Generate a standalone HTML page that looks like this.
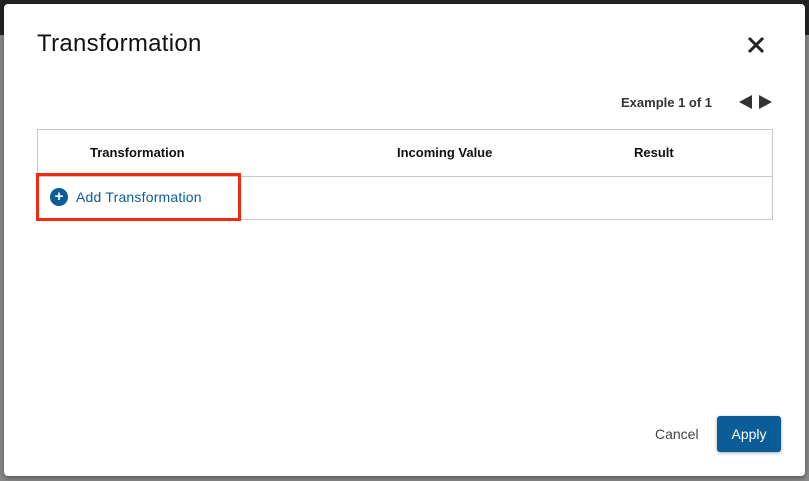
<!DOCTYPE html>
<html><head><meta charset="utf-8"><style>
*{margin:0;padding:0;box-sizing:border-box}
body{width:809px;height:481px;overflow:hidden;position:relative;background:#8a8a8a;font-family:"Liberation Sans",Arial,sans-serif}
.top{position:absolute;left:0;top:0;width:809px;height:35px;background:#232323}
.dlg{position:absolute;left:4px;top:4px;width:801px;height:472px;background:#fff;border-radius:4px;box-shadow:0 2px 6px rgba(0,0,0,.4)}
.title{position:absolute;left:37px;top:30px;font-size:24px;color:#111;letter-spacing:0.3px}
.close{position:absolute;left:745px;top:34px}
.ex{position:absolute;left:621px;top:95px;font-size:13px;color:#333;font-weight:bold}
.tbl{position:absolute;left:37px;top:129px;width:736px;height:91px;border:1px solid #c8c8c8}
.hr{position:absolute;left:0;top:46px;width:100%;border-top:1px solid #c8c8c8}
.th{position:absolute;top:15px;font-size:13px;font-weight:bold;color:#111}
.red{position:absolute;left:36px;top:173px;width:205px;height:48px;border:3px solid #f22c14}
.add{position:absolute;left:76px;top:189px;font-size:14px;color:#0a5d96;letter-spacing:0.2px}
.plus{position:absolute;left:50px;top:188px;width:18px;height:18px;border-radius:50%;background:#0a5d96;color:#fff;font-weight:bold;font-size:15px;line-height:18px;text-align:center}
.cancel{position:absolute;left:655px;top:426px;font-size:14px;color:#444}
.apply{position:absolute;left:717px;top:416px;width:64px;height:36px;background:#0a5d96;border-radius:3px;color:#fff;font-size:14px;line-height:36px;text-align:center;box-shadow:0 1px 3px rgba(0,0,0,.35)}
</style></head><body>
<div class="top"></div>
<div class="dlg"></div>
<div class="title">Transformation</div>
<svg class="close" width="22" height="22" viewBox="0 0 22 22"><path d="M4 4L18 18M18 4L4 18" stroke="#222" stroke-width="3"/></svg>
<div class="ex">Example 1 of 1</div>
<svg style="position:absolute;left:738px;top:94px" width="36" height="16" viewBox="0 0 36 16"><path d="M14 1L1 8L14 15Z" fill="#333"/><path d="M21 1L34 8L21 15Z" fill="#333"/></svg>
<div class="tbl"><div class="hr"></div>
<div class="th" style="left:52px">Transformation</div>
<div class="th" style="left:359px">Incoming Value</div>
<div class="th" style="left:596px">Result</div>
</div>
<div class="red"></div>
<div class="plus">+</div>
<div class="add">Add Transformation</div>
<div class="cancel">Cancel</div>
<div class="apply">Apply</div>
</body></html>
